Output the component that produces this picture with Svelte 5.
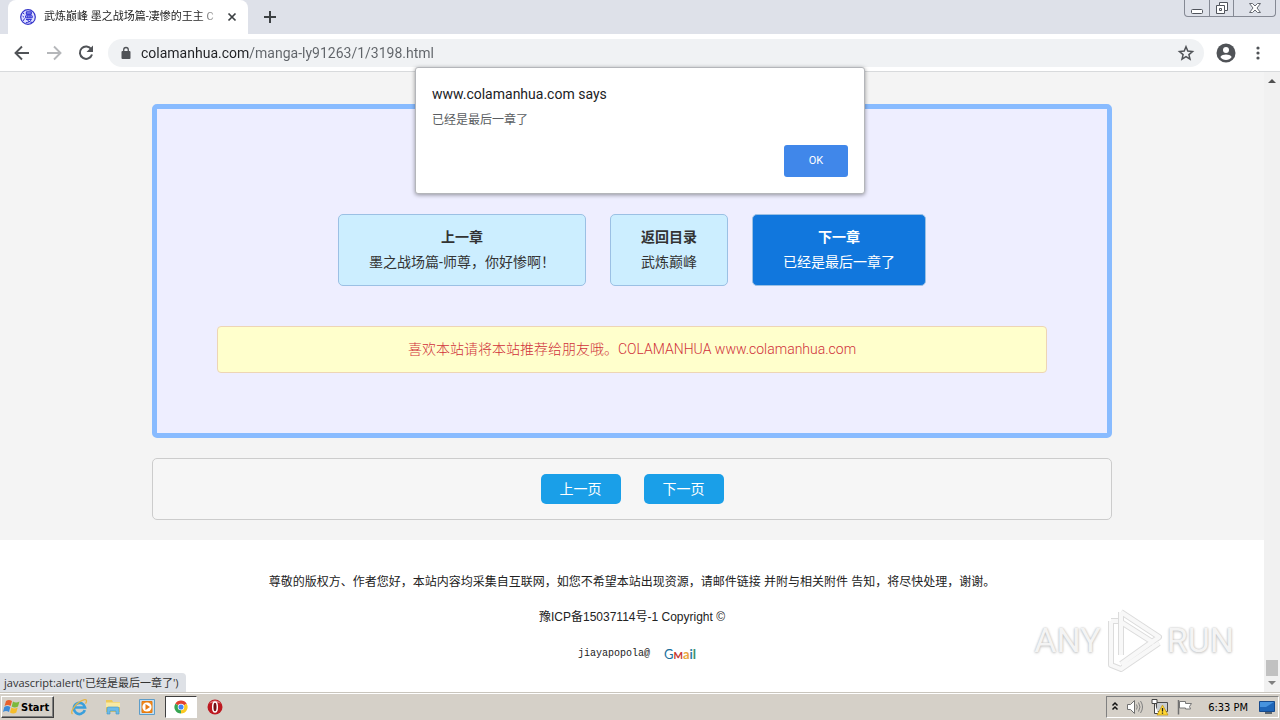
<script>
	let address = $state('colamanhua.com/manga-ly91263/1/3198.html');

	const chapters = [
		{ label: '上一章', name: '墨之战场篇-师尊，你好惨啊！' },
		{ label: '返回目录', name: '武炼巅峰' },
		{ label: '下一章', name: '已经是最后一章了', active: true }
	];
	const pages = ['上一页', '下一页'];
</script>

<div class="desktop">
	<header class="tabstrip">
		<div class="tab">
			<svg class="favicon" viewBox="0 0 16 16" aria-hidden="true">
				<circle cx="8" cy="8" r="7.3" fill="#dfe0ff" stroke="#3434c8" stroke-width="1.2" />
				<path
					d="M3 4l1.3 1M2.6 7.2l1.4 1M3 12l1.7-2.6M6.3 2.8h5v2.6h-5zM6.3 4.1h5M5.6 6.8h6.6v2H5.6zM7.8 6.8v2M10 6.8v2M6 10.4h5.4c-1 2-3 3-5.6 3.4M7 10.6c1.2 1.6 3 2.6 5.2 2.8"
					fill="none"
					stroke="#2727cf"
				/>
			</svg>
			<span class="tab-title" lang="zh-CN">武炼巅峰 墨之战场篇-凄惨的王主 C</span>
			<button type="button" class="icon-btn" aria-label="Close tab">
				<svg width="16" height="16" viewBox="0 0 16 16"><path d="M4.5 4.5l7 7M11.5 4.5l-7 7" stroke="#3c4043" stroke-width="1.7" /></svg>
			</button>
		</div>
		<button type="button" class="icon-btn new-tab" aria-label="New tab">
			<svg width="14" height="14" viewBox="0 0 14 14"><path d="M7 1v12M1 7h12" stroke="#3c4043" stroke-width="2" /></svg>
		</button>
		<div class="window-controls">
			<button type="button" aria-label="Minimize">
				<svg width="14" height="14" viewBox="0 0 14 14"><rect x="1.5" y="8.5" width="11" height="4" rx="1" fill="#fff" stroke="#50545c" /></svg>
			</button>
			<button type="button" aria-label="Restore">
				<svg width="14" height="14" viewBox="0 0 14 14">
					<path d="M4.5 1.5h8v8h-3v3h-8v-8h3z" fill="#fff" stroke="#50545c" />
					<path d="M4.5 4.5h5v5M4.5 7.5h2v2h-2z" fill="none" stroke="#50545c" />
				</svg>
			</button>
			<button type="button" class="close" aria-label="Close">
				<svg width="14" height="14" viewBox="0 0 14 14"><path d="M1.5 2.5h3l2.5 2.5 2.5-2.5h3l-3.5 4.5 3.5 4.5h-3l-2.5-2.5-2.5 2.5h-3l3.5-4.5z" fill="#fff" stroke="#666a72" /></svg>
			</button>
		</div>
	</header>

	<div class="toolbar">
		<button type="button" class="icon-btn" aria-label="Back">
			<svg width="20" height="20" viewBox="0 0 20 20"><path d="M17 10H4M10 3.5L3.5 10l6.5 6.5" fill="none" stroke="#505357" stroke-width="1.9" /></svg>
		</button>
		<button type="button" class="icon-btn" aria-label="Forward">
			<svg width="20" height="20" viewBox="0 0 20 20"><path d="M3 10h13M10 3.5l6.5 6.5-6.5 6.5" fill="none" stroke="#b5b7ba" stroke-width="1.9" /></svg>
		</button>
		<button type="button" class="icon-btn" aria-label="Reload">
			<svg width="20" height="20" viewBox="0 0 20 20">
				<path d="M15.3 6.3A6.2 6.2 0 1 0 16 11.5" fill="none" stroke="#505357" stroke-width="2" />
				<path d="M17 2.5v6.5h-6.5z" fill="#505357" />
			</svg>
		</button>
		<div class="omnibox">
			<svg width="12" height="14" viewBox="0 0 12 14" aria-hidden="true">
				<rect x="1.5" y="5" width="9" height="8" rx="1" fill="#505357" />
				<path d="M3.7 5.5V3.8a2.3 2.3 0 0 1 4.6 0v1.7" fill="none" stroke="#505357" stroke-width="1.3" />
			</svg>
			<input type="text" aria-label="Address" bind:value={address} />
			<button type="button" class="icon-btn" aria-label="Bookmark this page">
				<svg width="18" height="18" viewBox="0 0 18 18"><path d="M9 2.7l1.8 4.4 4.7.4-3.6 3.1 1.1 4.6L9 12.7l-4 2.5 1.1-4.6-3.6-3.1 4.7-.4z" fill="none" stroke="#505357" stroke-width="1.5" /></svg>
			</button>
		</div>
		<button type="button" class="icon-btn" aria-label="Profile">
			<svg width="20" height="20" viewBox="0 0 20 20">
				<circle cx="10" cy="10" r="9.5" fill="#505357" />
				<circle cx="10" cy="7" r="3" fill="#fff" />
				<path d="M4.3 14c1-2 3.7-2.6 5.7-2.6s4.7.6 5.7 2.6c-1.3 1.9-3.3 3-5.7 3s-4.4-1.1-5.7-3z" fill="#fff" />
			</svg>
		</button>
		<button type="button" class="icon-btn menu" aria-label="Menu">
			<svg width="4" height="16" viewBox="0 0 4 16" fill="#505357"><circle cx="2" cy="3" r="1.6" /><circle cx="2" cy="8" r="1.6" /><circle cx="2" cy="13" r="1.6" /></svg>
		</button>
	</div>

	<div class="viewport">
		<div class="page" lang="zh-CN">
			<main>
				<section class="panel">
					<nav class="chapters">
						{#each chapters as chapter}
							<a href="#chapter" class="chapter" class:active={chapter.active}>
								<strong>{chapter.label}</strong>
								<span>{chapter.name}</span>
							</a>
						{/each}
					</nav>
					<p class="notice">喜欢本站请将本站推荐给朋友哦。COLAMANHUA www.colamanhua.com</p>
				</section>
				<nav class="pager">
					{#each pages as page}
						<a href="#page">{page}</a>
					{/each}
				</nav>
			</main>
			<footer>
				<p>尊敬的版权方、作者您好，本站内容均采集自互联网，如您不希望本站出现资源，请邮件链接 并附与相关附件 告知，将尽快处理，谢谢。</p>
				<p>豫ICP备15037114号-1 Copyright ©</p>
				<p class="mail">
					<span>jiayapopola@</span>
					<span class="gmail"><b class="g">G</b><b class="m">M</b><b class="a">a</b><b class="i">i</b><b class="l">l</b></span>
				</p>
			</footer>
		</div>
		<div class="scrollbar" aria-hidden="true">
			<svg width="16" height="17" viewBox="0 0 16 17"><path d="M4 11l4-4 4 4z" fill="#505050" /></svg>
			<div class="thumb"></div>
			<svg width="16" height="16" viewBox="0 0 16 16"><path d="M4 5l4 4 4-4z" fill="#808080" /></svg>
		</div>
		<div class="status">javascript:alert('已经是最后一章了')</div>
		<div class="watermark">
			<span>ANY</span>
			<svg width="60" height="64" viewBox="0 0 60 64" aria-hidden="true">
				<path d="M17 4v43M17 4l38 25-38 27M17 14l33 21M7 13v44l10 4 38-26M7 13h7" fill="none" stroke="#dcdcdc" stroke-width="6" stroke-linejoin="round" />
				<path d="M17 4v43M17 4l38 25-38 27M17 14l33 21M7 13v44l10 4 38-26M7 13h7" fill="none" stroke="#f8f8f8" stroke-width="4" stroke-linejoin="round" />
			</svg>
			<span>RUN</span>
		</div>
	</div>

	<div class="alert" role="alertdialog" aria-labelledby="alert-title" aria-describedby="alert-text">
		<h2 id="alert-title">www.colamanhua.com says</h2>
		<p id="alert-text" lang="zh-CN">已经是最后一章了</p>
		<button type="button">OK</button>
	</div>

	<footer class="taskbar">
		<button type="button" class="start">
			<svg width="18" height="16" viewBox="0 0 18 16" aria-hidden="true">
				<path d="M3 2c2-1.5 4-1.3 6 0L7.6 7c-2-1.2-4-1.2-6 0z" fill="#e8602c" />
				<path d="M10 2.5c2 1.2 4 1.2 6.5 0L15 7.5c-2 1.2-4.3 1.2-6.3 0z" fill="#7bb93c" />
				<path d="M1.3 8c2-1.2 4-1.2 6 0L6 13c-2-1.2-4-1.2-6 0z" fill="#3c8ad8" />
				<path d="M8.4 8.5c2 1.2 4 1.2 6.3 0l-1.4 5c-2 1.2-4.3 1.2-6.3 0z" fill="#f5bd2b" />
			</svg>
			Start
		</button>
		<div class="launchers">
			<button type="button" aria-label="Internet Explorer">
				<svg width="18" height="18" viewBox="0 0 18 18">
					<path d="M14.8 12.2A5.6 5.6 0 1 1 15 9.5H5" fill="none" stroke="#3a9fdc" stroke-width="2.7" />
					<path d="M2.5 16C-.5 13.5 7 3.5 14.5 1.7c2.6-.5 2.4 2 1 4" fill="none" stroke="#e4b548" stroke-width="1.3" />
				</svg>
			</button>
			<button type="button" aria-label="Explorer">
				<svg width="18" height="18" viewBox="0 0 18 18">
					<path d="M2 2h6l1 2h7v10H2z" fill="#edc95a" />
					<path d="M2 4.5h14V9H2z" fill="#f8e9a4" />
					<path d="M3 16V10.5q0-1.5 1.5-1.5h9q1.5 0 1.5 1.5V16h-3v-3H6v3z" fill="#6dbbe8" stroke="#3e93c8" stroke-width=".6" />
				</svg>
			</button>
			<button type="button" aria-label="Media Player">
				<svg width="18" height="18" viewBox="0 0 18 18">
					<path d="M1.500 1.500h15v15h-15z" fill="#c4dff2" stroke="#5d9dc9" />
					<path d="M4 3.500h10v11H4z" fill="#f18b1f" stroke="#e57a10" />
					<circle cx="9" cy="9" r="4.600" fill="#fff" />
					<path d="M7.5 6l4.5 3-4.5 3z" fill="#e87a12" />
				</svg>
			</button>
			<button type="button" class="pressed" aria-label="Chrome">
				<svg width="14" height="14" viewBox="0 0 16 16">
					<path d="M8 8L1.5 4.2A7.5 7.5 0 0 1 14.5 4.25z" fill="#e2412f" />
					<path d="M8 8L1.5 4.2A7.5 7.5 0 0 0 8 15.5z" fill="#37a552" />
					<path d="M8 8l6.5-3.8A7.5 7.5 0 0 1 8 15.5z" fill="#fbc921" />
					<circle cx="8" cy="8" r="3.7" fill="#fff" />
					<circle cx="8" cy="8" r="2.9" fill="#4285f4" />
				</svg>
			</button>
			<button type="button" aria-label="Opera">
				<svg width="16" height="16" viewBox="0 0 16 16">
					<circle cx="8" cy="8" r="7.5" fill="#bd1820" />
					<path d="M2 5a7 7 0 0 1 12 0c-2-2-10-2-12 0z" fill="#e2757a" />
					<ellipse cx="8" cy="8" rx="2.3" ry="5" fill="#741016" stroke="#fff" stroke-width="1.5" />
				</svg>
			</button>
		</div>
		<div class="tray">
			<svg width="8" height="12" viewBox="0 0 8 12" aria-hidden="true"><path d="M1.5 4.5L4 2l2.5 2.5M1.5 8.5L4 6l2.5 2.5" fill="none" stroke="#111" stroke-width="1.5" /></svg>
			<svg width="18" height="16" viewBox="0 0 18 16" aria-hidden="true">
				<path d="M1.5 5.5h3l4-4v13l-4-4h-3z" fill="#fff" stroke="#707070" />
				<path d="M10.5 5.5q1.5 2.5 0 5M12.5 3.5q3 4.5 0 9M14.5 2q4 6 0 12" fill="none" stroke="#808080" />
			</svg>
			<svg width="18" height="18" viewBox="0 0 18 18" aria-hidden="true">
				<path d="M5.5 4.5h11v9h-11z" fill="#c9cdd0" stroke="#4a4a4a" />
				<path d="M1 1.5h5v4H1zM3.5 5.5v10h4" fill="#fff" stroke="#444" />
				<path d="M11.5 7l5.5 10H6z" fill="#ffd632" stroke="#bd9210" stroke-width=".7" />
				<path d="M11.5 10v3.5M11.5 14.5v1.3" stroke="#222" stroke-width="1.3" />
			</svg>
			<svg width="18" height="16" viewBox="0 0 18 16" aria-hidden="true">
				<path d="M2.5 1v14.5" stroke="#707070" stroke-width="1.5" />
				<path d="M3.5 2.5h6v2h6l-2 3 1 2.5h-5V9h-6z" fill="#fff" stroke="#777" />
			</svg>
			<time>6:33 PM</time>
			<svg width="16" height="16" viewBox="0 0 16 16" aria-hidden="true">
				<path d="M.5 2.5h15v10H.5z" fill="#1f66b8" stroke="#174a8c" />
				<path d="M1 3h14L7 8H1z" fill="#4793de" />
				<path d="M6 14h7" stroke="#5d666e" stroke-width="2" />
			</svg>
		</div>
	</footer>
</div>

<style>
	:global(body) {
		margin: 0;
	}
	.desktop {
		position: relative;
		display: flex;
		flex-direction: column;
		height: 100vh;
		overflow: hidden;
		font-family: Roboto, 'Noto Sans CJK SC', sans-serif;
		font-size: 14px;
		color: #333;
	}
	button {
		padding: 0;
		border: 0;
		background: none;
		font: inherit;
		color: inherit;
	}
	svg {
		display: block;
		flex: none;
	}
	p,
	h2 {
		margin: 0;
	}
	a {
		color: inherit;
		text-decoration: none;
	}
	.icon-btn {
		display: grid;
		place-items: center;
		flex: none;
	}

	/* window frame */
	.tabstrip {
		display: flex;
		align-items: stretch;
		height: 34px;
		padding-left: 8px;
		background: #dee1e9;
	}
	.tab {
		display: flex;
		align-items: center;
		box-sizing: border-box;
		width: 240px;
		padding: 0 8px 0 12px;
		border-radius: 8px 8px 0 0;
		background: #fff;
	}
	.favicon {
		width: 16px;
		height: 16px;
	}
	.tab-title {
		flex: 1;
		min-width: 0;
		margin: 0 4px 0 8px;
		overflow: hidden;
		white-space: nowrap;
		font-size: 11px;
		line-height: 16px;
		color: #222;
		mask-image: linear-gradient(to right, #000 154px, transparent 178px);
	}
	.new-tab {
		width: 44px;
	}
	.window-controls {
		display: flex;
		height: 16px;
		margin: 0 4px 0 auto;
		border: 1px solid #858994;
		border-top: 0;
		border-radius: 0 0 4px 4px;
	}
	.window-controls button {
		display: grid;
		place-items: center;
		width: 24px;
	}
	.window-controls button + button {
		border-left: 1px solid #858994;
	}
	.window-controls .close {
		width: 42px;
	}
	.toolbar {
		display: flex;
		align-items: center;
		gap: 12px;
		height: 37px;
		padding: 0 12px;
		border-bottom: 1px solid #d8dadc;
		background: #fff;
	}
	.omnibox {
		display: flex;
		flex: 1;
		align-items: center;
		gap: 8px;
		height: 28px;
		padding: 0 9px 0 12px;
		border-radius: 14px;
		background: #f0f2f4;
	}
	.omnibox input {
		flex: 1;
		min-width: 0;
		padding: 0 0 0 1px;
		border: 0;
		outline: 0;
		/* host is darker than the path */
		background: linear-gradient(to right, #202124 14ch, #5f6368 14ch);
		background-clip: text;
		-webkit-text-fill-color: transparent;
		font: inherit;
		line-height: 20px;
	}
	.menu {
		width: 20px;
	}

	/* page */
	.viewport {
		position: relative;
		display: flex;
		flex: 1;
		min-height: 0;
	}
	.page {
		display: flex;
		flex: 1;
		flex-direction: column;
		min-width: 0;
		overflow: hidden;
		background: #fff;
	}
	main {
		display: flex;
		flex-direction: column;
		align-items: center;
		gap: 20px;
		padding: 32px 24px 20px;
		background: #f4f4f4;
	}
	.panel,
	.pager {
		box-sizing: border-box;
		width: 100%;
		max-width: 960px;
	}
	.panel {
		padding: 105px 60px 60px;
		border: 5px solid #8bf;
		border-radius: 5px;
		background: #eef;
	}
	.chapters {
		display: flex;
		justify-content: center;
		gap: 24px;
	}
	.chapter {
		display: flex;
		flex-direction: column;
		align-items: center;
		padding: 10px 30px;
		border: 1px solid #9bc0e4;
		border-radius: 5px;
		background: #cef;
		line-height: 25px;
	}
	.chapter.active {
		background: #17d;
		color: #fff;
	}
	.notice {
		margin-top: 40px;
		padding: 10px;
		border: 1px solid #edd5b5;
		border-radius: 4px;
		background: #ffc;
		text-align: center;
		font-weight: 300;
		line-height: 25px;
		color: #d0303a;
	}
	.pager {
		display: flex;
		justify-content: center;
		gap: 23px;
		padding: 15px;
		border: 1px solid #ccc;
		border-radius: 5px;
		background: #f6f6f6;
	}
	.pager a {
		width: 80px;
		border-radius: 5px;
		background: #1a9fe8;
		text-align: center;
		line-height: 30px;
		color: #fff;
	}
	.page footer {
		display: flex;
		flex-direction: column;
		align-items: center;
		gap: 15px;
		padding: 32px 24px 0;
		font-family: 'Liberation Sans', 'Noto Sans CJK SC', sans-serif;
		font-size: 12px;
		line-height: 20px;
		color: #222;
	}
	.mail {
		display: flex;
		gap: 14px;
		padding-left: 10px;
		font-family: 'Liberation Mono', monospace;
		font-size: 10px;
		line-height: 24px;
	}
	.gmail {
		font-family: Lato, sans-serif;
		font-size: 13px;
	}
	.gmail .g {
		font-weight: 400;
		color: #1a6f9c;
	}
	.gmail .m {
		font-size: 10px;
		color: #c5352e;
	}
	.gmail .a {
		color: #eaa63c;
	}
	.gmail .i {
		color: #2a7fa8;
	}
	.gmail .l {
		color: #3d8f6c;
	}
	.scrollbar {
		display: flex;
		flex-direction: column;
		width: 16px;
		background: #f1f1f1;
	}
	.thumb {
		height: 16px;
		margin: auto 2px 0;
		background: #c1c1c1;
	}
	.status {
		position: absolute;
		bottom: 0;
		left: 0;
		padding: 0 7px 0 4px;
		border-radius: 0 4px 0 0;
		background: #dee1e6;
		font-family: 'Open Sans', 'Noto Sans CJK SC', sans-serif;
		font-size: 11px;
		line-height: 19px;
	}
	.watermark {
		position: absolute;
		right: 46px;
		bottom: 20px;
		display: flex;
		align-items: center;
		gap: 3px;
		font-size: 34px;
		line-height: 64px;
		color: #f4f4f4;
		text-shadow:
			0 0 2px #bbb,
			0 1px 3px #ccc;
	}

	/* javascript dialog */
	.alert {
		position: absolute;
		top: 67px;
		left: 50%;
		display: flex;
		flex-direction: column;
		box-sizing: border-box;
		width: 450px;
		padding: 16px;
		border: 1px solid #b4b6ba;
		border-radius: 3px;
		background: #fff;
		box-shadow: 0 1px 4px #0006;
		transform: translateX(-50%);
	}
	.alert h2 {
		font-size: 14px;
		font-weight: 400;
		line-height: 20px;
		color: #202124;
	}
	.alert p {
		margin-top: 6px;
		font-size: 12px;
		line-height: 20px;
		color: #5a5d61;
	}
	.alert button {
		align-self: flex-end;
		width: 64px;
		margin-top: 15px;
		border-radius: 3px;
		background: #4087ea;
		font-size: 11px;
		line-height: 32px;
		color: #fff;
	}

	/* taskbar */
	.taskbar {
		display: flex;
		align-items: center;
		gap: 9px;
		box-sizing: border-box;
		height: 28px;
		padding: 1px 1px 0;
		border-top: 1px solid #c9c5bd;
		background: #d5d0c8;
		box-shadow: inset 0 1px #fff;
	}
	.start {
		display: flex;
		align-items: center;
		height: 22px;
		padding: 0 4px 0 1px;
		border: 1px solid;
		border-color: #fff #404040 #404040 #fff;
		box-shadow: inset -1px -1px #808080;
		font: bold 11px 'DejaVu Sans Condensed', sans-serif;
		color: #000;
	}
	.launchers {
		display: flex;
		align-items: center;
		gap: 2px;
	}
	.launchers button {
		display: grid;
		place-items: center;
		box-sizing: border-box;
		width: 32px;
		height: 22px;
	}
	.launchers .pressed {
		border: 1px solid;
		border-color: #404040 #fff #fff #404040;
		background: #fff;
	}
	.tray {
		display: flex;
		align-items: center;
		gap: 7px;
		height: 20px;
		margin-left: auto;
		padding: 0 3px 0 4px;
		border: 1px solid;
		border-color: #808080 #fff #fff #808080;
	}
	.tray time {
		margin: 0 4px 0 7px;
		font: 11px 'DejaVu Sans Condensed', sans-serif;
		color: #000;
	}
</style>
